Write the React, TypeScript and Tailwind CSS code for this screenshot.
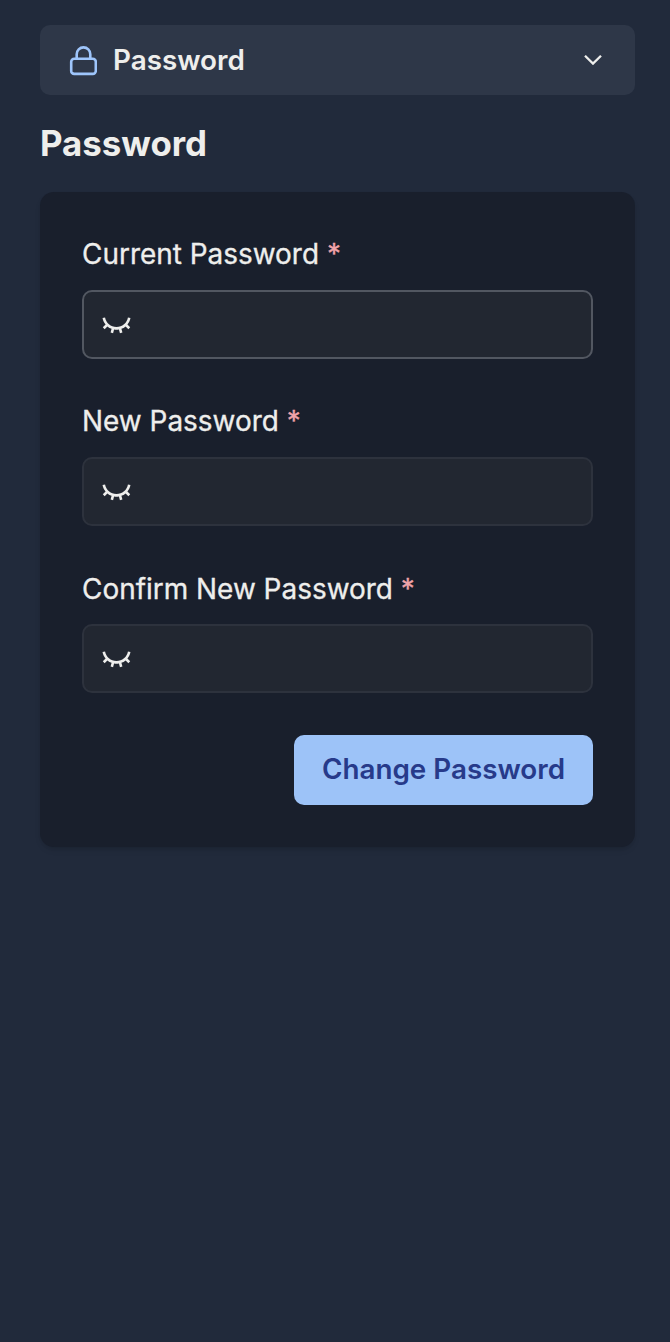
import { RiEyeCloseLine } from "react-icons/ri";

function LockIcon() {
  return (
    <svg className="h-[31px] w-[28px] shrink-0" viewBox="0 0 28 31" fill="none" stroke="#9ec5fb" strokeWidth="2.6">
      <rect x="2.2" y="13.7" width="24.6" height="15.2" rx="3" />
      <path d="M7.7 13.7V9.2a6.8 6.8 0 0 1 13.6 0v4.5" />
    </svg>
  );
}

function Field({ label, active = false, labelClass = "" }: { label: string; active?: boolean; labelClass?: string }) {
  return (
    <div className="flex flex-col">
      <label
        className={`flex h-[37px] items-center text-[27.95px] whitespace-pre text-[#eeeeec] [-webkit-text-stroke:0.3px_currentColor] ${labelClass}`}
      >
        <span>{label} </span>
        <span className="text-[#f0a3a9]">*</span>
      </label>
      <div
        className={`mt-[17px] flex h-[69px] items-center rounded-[10px] border-2 bg-[#222731] pl-[17px] ${
          active ? "border-[#525761]" : "border-[#2d323d]"
        }`}
      >
        <RiEyeCloseLine className="h-[31px] w-[31px] text-[#eeeeec]" />
      </div>
    </div>
  );
}

export default function App() {
  return (
    <div className="min-h-[1342px] bg-[#212a3b] pt-[25px] pr-[35px] pl-[40px] font-['Inter',sans-serif]">
      <button className="flex h-[70px] w-full items-center rounded-[10px] bg-[#2e3748] pr-[33px] pl-[29px]">
        <LockIcon />
        <span className="ml-[16px] pt-[2px] text-[27.8px] font-semibold text-[#eeeeec]">Password</span>
        <svg className="ml-auto h-[10px] w-[18px]" viewBox="0 0 18 10" fill="none" stroke="#eeeeec" strokeWidth="2.3">
          <path d="M1 .8l8 7.8 8-7.8" />
        </svg>
      </button>
      <h1 className="mt-[25px] text-[34.8px] leading-[46px] font-bold text-[#eeeeec]">Password</h1>
      <section className="mt-[26px] flex h-[655px] flex-col rounded-[14px] bg-[#191f2c] px-[42px] pt-[44px] shadow-md">
        <div className="flex flex-col gap-[44px]">
          <Field label="Current Password" active />
          <Field label="New Password" />
          <Field label="Confirm New Password" labelClass="pt-[2px]" />
        </div>
        <button className="mt-[42px] h-[70px] w-[299px] self-end rounded-[10px] bg-[#9dc3f8] text-[27.8px] font-semibold text-[#273a8a]">
          Change Password
        </button>
      </section>
    </div>
  );
}
